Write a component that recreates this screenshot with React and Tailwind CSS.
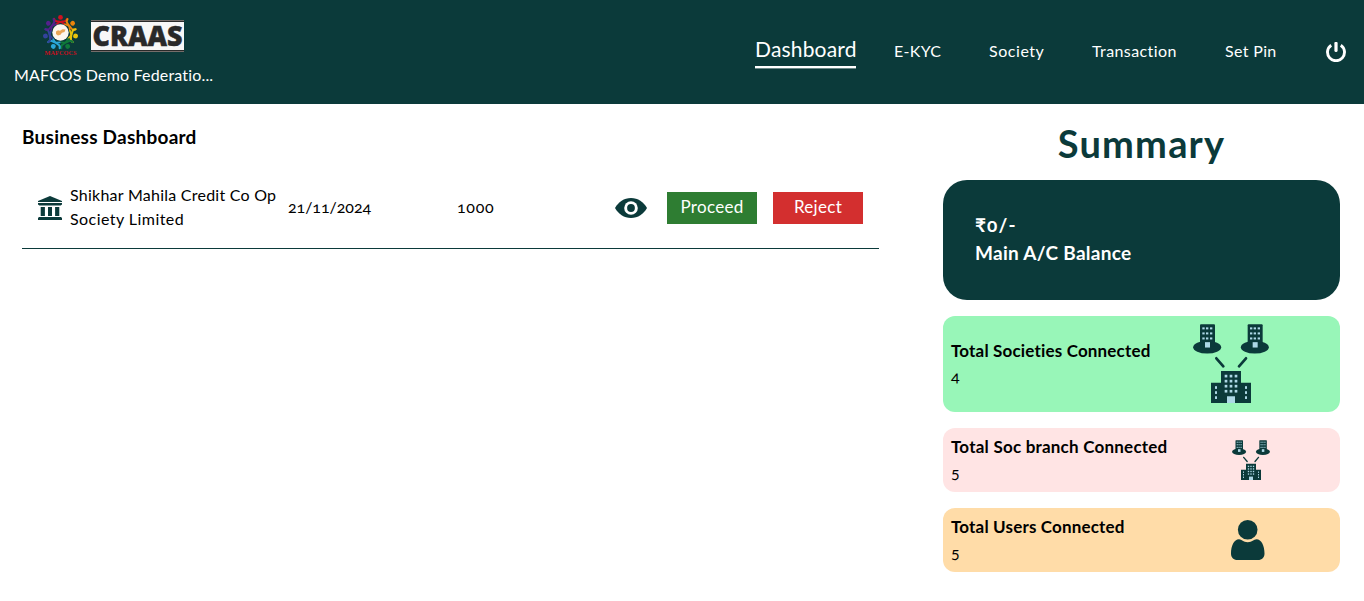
import React from 'react';

function FederationLogo() {
  const people = [
    ['#d0111f', -90], ['#e8830c', -38], ['#e8c40c', 12], ['#0f7a3a', 62],
    ['#2aa7d8', 118], ['#32439c', 168], ['#54208c', 218],
  ];
  return (
    <svg width="38" height="42" viewBox="0 0 38 42" className="block shrink-0">
      {people.map(([color, angle]) => (
        <g key={angle} transform={`translate(18.5 17.8) rotate(${angle})`} fill="none" stroke={color}>
          <circle cx="15.4" cy="0" r="2.4" fill={color} stroke="none" />
          <path d="M14 -6.5C9.5 -5.5 12 -2 11 0C12 2 9.5 5.5 14 6.5" strokeWidth="2" strokeLinecap="round" />
          <path d="M11 0L8.5 -4.5M11 0L8.5 4.5" strokeWidth="1.6" />
        </g>
      ))}
      <circle cx="18.5" cy="17.5" r="8.2" fill="#fdf6ee" />
      <path d="M14 16.5l2-1.2 2 .5 2.5-1.5 3 .2-1 2.6-2.6.7-1.4 2-2.6.6-1.9-1.3z" fill="#e9a558" />
      <text x="18.5" y="40.4" textAnchor="middle" textLength="32" lengthAdjust="spacingAndGlyphs" fill="#c4101e" fontFamily="'Liberation Serif', serif" fontWeight="700" fontSize="5.4">MAFCOCS</text>
    </svg>
  );
}

function PowerIcon() {
  return (
    <svg width="20" height="20" viewBox="0 0 20 20" fill="none" stroke="white" className="block">
      <path d="M5.2 3.2A8.5 8.5 0 1 0 14.8 3.2" strokeWidth="2.9" />
      <path d="M10 1.3V8.4" strokeWidth="3.2" strokeLinecap="round" />
    </svg>
  );
}

function BankIcon() {
  return (
    <svg width="24" height="24" viewBox="0 0 24 24" fill="#0b3a3a" className="block shrink-0">
      <path d="M12 0L24 5V6H0V5z" />
      <path d="M0 7H24V8.6L22.6 9.6H1.4L0 8.6z" />
      <path d="M2.7 11H6.9V20H2.7zM10 11H14V20H10zM17.1 11H21.3V20H17.1z" />
      <path d="M1 21H23L24 22V24H0V22z" />
    </svg>
  );
}

function EyeIcon() {
  return (
    <svg width="32" height="20" viewBox="0 0 32 20" className="block">
      <path d="M0 10C3.4 4 9 0 16 0s12.600 4 16 10c-3.400 6-9 10-16 10S3.400 16 0 10z" fill="#0b3a3a" />
      <circle cx="16" cy="10" r="6.800" fill="white" />
      <circle cx="16" cy="10" r="3.900" fill="#0b3a3a" />
    </svg>
  );
}

function Windows({ xs, ys, w, h }) {
  return ys.flatMap((y) => xs.map((x) => <rect key={`${x}-${y}`} x={x} y={y} width={w} height={h} fill="#add8e6" />));
}

function Tower({ x }) {
  return (
    <g transform={`translate(${x} 0)`}>
      <ellipse cx="81.500" cy="113" rx="42" ry="19" fill="#0b3a3a" />
      <rect x="60" y="45" width="45" height="65" rx="3" fill="#0b3a3a" />
      <Windows xs={[67, 78, 90]} ys={[54, 69, 84]} w={7} h={6} />
      <rect x="75" y="98" width="15" height="16" fill="#add8e6" />
    </g>
  );
}

function NetworkIcon({ width, height }) {
  return (
    <svg width={width} height={height} viewBox="39 44 228 235" preserveAspectRatio="none" className="block">
      <Tower x={0} />
      <Tower x={143} />
      <path d="M109 146L130 170M198 146L177 170" stroke="#0b3a3a" strokeWidth="8" strokeLinecap="round" />
      <path d="M93 219H123V184H183V219H213V279H93z" fill="#0b3a3a" />
      <Windows xs={[134, 149, 164]} ys={[195, 210, 225, 240]} w={8} h={8} />
      <Windows xs={[105, 195]} ys={[229, 244, 259]} w={6} h={8} />
      <rect x="141" y="259" width="24" height="20" fill="#add8e6" />
    </svg>
  );
}

function UserIcon() {
  return (
    <svg width="34" height="40" viewBox="0 0 34 40" fill="#0b3a3a" className="block">
      <circle cx="16.700" cy="9.800" r="9.800" />
      <path d="M8 19.300C11 19.300 12 22.300 16.700 22.300S22.500 19.300 25.500 19.300C30.500 19.300 33.500 26 33.500 33.500C33.500 37.500 31 40 27 40H6.500C2.500 40 0 37.500 0 33.500C0 26 3 19.300 8 19.300z" />
    </svg>
  );
}

function Stat({ title, value, children, className, iconClass }) {
  return (
    <div className={`flex items-center rounded-xl pl-2 ${className}`}>
      <div className="w-[229px] shrink-0 whitespace-nowrap pb-0.5">
        <div className="text-[17px] font-bold leading-6">{title}</div>
        <div className="leading-6 pt-px">{value}</div>
      </div>
      <div className={iconClass}>{children}</div>
    </div>
  );
}

export default function App() {
  return (
    <div className="h-[601px] overflow-hidden bg-white font-['Lato',sans-serif] text-base text-black [font-feature-settings:'onum']">
      <header className="flex h-[104px] justify-between bg-[#0b3a3a] text-white">
        <div className="pl-3.5 pt-[15px]">
          <div className="flex items-start pl-7">
            <FederationLogo />
            <div className="ml-[11px] mt-[5px] h-8 w-[93px] border-y border-[#756d6a]">
              <div className="flex h-[30px] items-center justify-center border-y border-[#2a2a2a] bg-[#f7f7f7]">
                <svg width="91" height="28" viewBox="0 0 91 28" className="block">
                  <text x="0.5" y="24" textLength="90" lengthAdjust="spacingAndGlyphs" fill="#292929" stroke="#292929" strokeWidth="0.5" fontFamily="'Open Sans', sans-serif" fontWeight="800" fontSize="27.500">CRAAS</text>
                </svg>
              </div>
            </div>
          </div>
          <div className="mt-[6px] whitespace-nowrap leading-6 tracking-[0.17px]">MAFCOS Demo Federatio...</div>
        </div>
        <nav className="flex h-[102px] items-center pr-[18px] leading-6">
          <a className="mr-[38px] w-[101px] whitespace-nowrap border-b-2 border-white pb-[3px] text-[21px] leading-7 tracking-[0.18px] shadow-[0_1px_0_rgba(255,255,255,0.4)]">Dashboard</a>
          <a className="w-[95px] tracking-[0.3px]">E-KYC</a>
          <a className="w-[103px] tracking-[0.55px]">Society</a>
          <a className="w-[133px] tracking-[0.4px]">Transaction</a>
          <a className="w-[101px] tracking-[0.35px]">Set Pin</a>
          <div className="pt-0.5"><PowerIcon /></div>
        </nav>
      </header>

      <main className="flex">
        <section className="ml-[22px] w-[857px] pt-[19px]">
          <h1 className="text-[19px] font-bold leading-7 tracking-[0.24px]">Business Dashboard</h1>
          <div className="mt-[17px] flex h-[81px] items-center border-b border-[#0b3a3a] pl-4">
            <BankIcon />
            <div className="ml-2 w-[218px] whitespace-nowrap pb-0.5 leading-6">
              <div className="tracking-[0.25px]">Shikhar Mahila Credit Co Op</div>
              <div className="tracking-[0.45px]">Society Limited</div>
            </div>
            <div className="w-[169px] pb-0.5 tracking-[-0.05px]">21/11/2024</div>
            <div className="w-[158px] pb-0.5 tracking-[0.7px]">1000</div>
            <EyeIcon />
            <button className="ml-5 h-8 w-[90px] bg-[#2e7d32] pb-0.5 text-[17px] tracking-[0.3px] text-white">Proceed</button>
            <button className="ml-4 h-8 w-[90px] bg-[#d32f2f] pb-0.5 text-[17px] tracking-[0.3px] text-white">Reject</button>
          </div>
        </section>

        <aside className="ml-16 w-[397px] pt-5">
          <h2 className="h-10 text-center text-[38px] font-bold leading-[38px] tracking-[1.200px] text-[#0b3a3a]">Summary</h2>
          <div className="mt-4 h-[120px] rounded-3xl bg-[#0b3a3a] pl-8 pt-[31px] text-[19px] font-bold leading-7 text-white">
            <div className="tracking-[1.100px]">₹0/-</div>
            <div className="tracking-[0.27px]">Main A/C Balance</div>
          </div>
          <Stat title={<span className="tracking-[0.17px]">Total Societies Connected</span>} value="4" className="mt-4 h-24 bg-[#98f6b8]" iconClass="ml-[13px] pb-px">
            <NetworkIcon width={76} height={79} />
          </Stat>
          <Stat title={<span className="tracking-[0.22px]">Total Soc branch Connected</span>} value="5" className="mt-4 h-16 bg-[#ffe4e4]" iconClass="ml-[52px]">
            <NetworkIcon width={38} height={40} />
          </Stat>
          <Stat title={<span className="tracking-[0.17px]">Total Users Connected</span>} value="5" className="mt-4 h-16 bg-[#ffdca8]" iconClass="ml-[51px]">
            <UserIcon />
          </Stat>
        </aside>
      </main>
    </div>
  );
}
